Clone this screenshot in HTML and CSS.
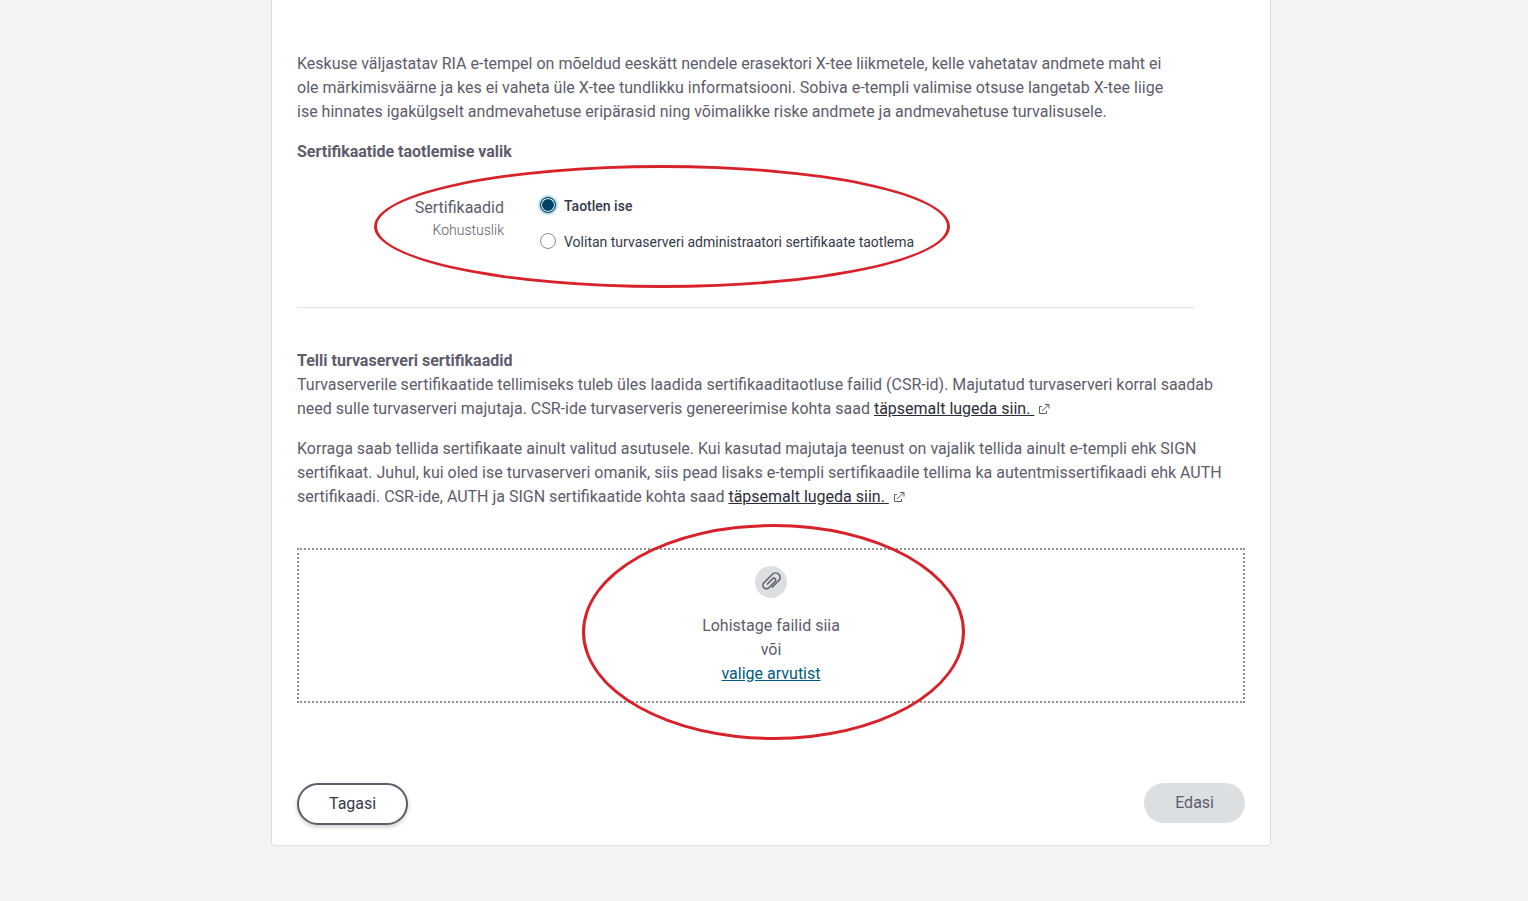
FILE: index.html
```html
<!DOCTYPE html>
<html lang="et">
  <head>
    <meta charset="UTF-8" />
    <meta name="viewport" content="width=device-width, initial-scale=1" />
    <title>Sertifikaatide taotlemine</title>
    <link rel="stylesheet" href="styles.css">
  </head>
  <body>
    <main class="card">
      <p class="intro">
        Keskuse väljastatav RIA e-tempel on mõeldud eeskätt nendele erasektori
        X-tee liikmetele, kelle vahetatav andmete maht ei ole märkimisväärne ja
        kes ei vaheta üle X-tee tundlikku informatsiooni. Sobiva e-templi
        valimise otsuse langetab X-tee liige ise hinnates igakülgselt
        andmevahetuse eripärasid ning võimalikke riske andmete ja andmevahetuse
        turvalisusele.
      </p>

      <h2>Sertifikaatide taotlemise valik</h2>
      <div class="choice" role="radiogroup" aria-labelledby="certLabel">
        <div class="choice-label">
          <span id="certLabel">Sertifikaadid</span>
          <small>Kohustuslik</small>
        </div>
        <div class="options">
          <label for="self">
            <input type="radio" id="self" name="cert" checked />
            <span>Taotlen ise</span>
          </label>
          <label for="admin">
            <input type="radio" id="admin" name="cert" />
            <span>Volitan turvaserveri administraatori sertifikaate taotlema</span>
          </label>
        </div>
        <div class="mark mark-choice"></div>
      </div>

      <hr />

      <h2>Telli turvaserveri sertifikaadid</h2>
      <p>
        Turvaserverile sertifikaatide tellimiseks tuleb üles laadida
        sertifikaaditaotluse failid (CSR-id). Majutatud turvaserveri korral
        saadab need sulle turvaserveri majutaja. CSR-ide turvaserveris
        genereerimise kohta saad
        <a class="external" href="#">täpsemalt lugeda siin.&nbsp;</a>
        <svg class="external-icon" viewBox="0 0 12 12" aria-hidden="true">
          <path d="M4 3.5H1.5V10.5H8.5V8M4 8L11 1.5M7 1.5H11V5.5" />
        </svg>
      </p>
      <p>
        Korraga saab tellida sertifikaate ainult valitud asutusele. Kui kasutad
        majutaja teenust on vajalik tellida ainult e-templi ehk SIGN
        sertifikaat. Juhul, kui oled ise turvaserveri omanik, siis pead lisaks
        e-templi sertifikaadile tellima ka autentmissertifikaadi ehk AUTH
        sertifikaadi. CSR-ide, AUTH ja SIGN sertifikaatide kohta saad
        <a class="external" href="#">täpsemalt lugeda siin.&nbsp;</a>
        <svg class="external-icon" viewBox="0 0 12 12" aria-hidden="true">
          <path d="M4 3.5H1.5V10.5H8.5V8M4 8L11 1.5M7 1.5H11V5.5" />
        </svg>
      </p>

      <div class="dropzone">
        <div class="clip">
          <svg viewBox="0 0 32 32" aria-hidden="true">
            <path transform="rotate(45 16 16)" d="M20.5 19V9.5A4.5 4.5 0 0 0 11.5 9.5V21.5A3.5 3.5 0 0 0 18.5 21.5V12.5A1.8 1.8 0 0 0 14.9 12.5V20" />
          </svg>
        </div>
        <span>Lohistage failid siia</span>
        <span>või</span>
        <a href="#">valige arvutist</a>
        <div class="mark mark-drop"></div>
      </div>

      <div class="actions">
        <button type="button" class="back">Tagasi</button>
        <button type="button" class="next" disabled>Edasi</button>
      </div>
    </main>
  </body>
</html>
```
FILE: styles.css
```css
* {
  box-sizing: border-box;
}
body {
  margin: 0;
  padding: 0 0 0 14px;
  background: #f3f3f3;
  color: #5e5c6b;
  font: 16px/24px Roboto, sans-serif;
}
.card {
  max-width: 1000px;
  margin: 0 auto 54px;
  padding: 52px 25px 20px;
  background: #fff;
  border: 1px solid #dcdfe2;
  border-top: 0;
  border-radius: 0 0 4px 4px;
}
p {
  margin: 0 0 16px;
}
.intro {
  max-width: 880px;
}
h2 {
  margin: 0;
  font-size: 16px;
  line-height: 24px;
  font-weight: 700;
}
.choice {
  position: relative;
  display: flex;
  gap: 36px;
  padding-top: 32px;
}
.choice-label {
  display: flex;
  flex-direction: column;
  width: 207px;
  text-align: right;
}
.choice-label small {
  font-size: 14px;
  line-height: 20px;
  font-weight: 300;
}
.options {
  display: flex;
  flex-direction: column;
  gap: 16px;
  color: #34394c;
  font-size: 14px;
  line-height: 20px;
}
.options label {
  display: flex;
  gap: 8px;
}
.options input {
  appearance: none;
  width: 16px;
  height: 16px;
  margin: 1px 0 0;
  border: 1px solid #8c8f99;
  border-radius: 50%;
}
.options input:checked {
  border-color: #004465;
  background: #004465;
  box-shadow: inset 0 0 0 1px #fff, 0 0 0 2px #b8dcea;
}
.options input:checked + span {
  font-weight: 500;
}
hr {
  max-width: 898px;
  margin: 55px 0 41px;
  border: 0;
  border-top: 1px solid #dfe1e4;
}
a {
  color: #005b7f;
}
.external {
  color: #2b2c38;
}
.external-icon {
  width: 12px;
  height: 12px;
  vertical-align: -1px;
  fill: none;
  stroke: #5e5c6b;
}
.dropzone {
  position: relative;
  display: flex;
  flex-direction: column;
  align-items: center;
  margin-top: 39px;
  padding: 16px 16px 15px;
  border: 2px dotted #8f9097;
}
.clip {
  width: 32px;
  height: 32px;
  margin-bottom: 16px;
  border-radius: 50%;
  background: #dbdfe2;
}
.clip svg {
  display: block;
  fill: none;
  stroke: #5e5c6b;
  stroke-width: 1.5;
  stroke-linecap: round;
}
.actions {
  display: flex;
  justify-content: space-between;
  align-items: flex-start;
  margin-top: 80px;
}
button {
  height: 40px;
  padding: 0 31px;
  border: 0;
  border-radius: 21px;
  font: inherit;
}
.back {
  height: 42px;
  padding: 0 30px;
  border: 2px solid #5e5c6b;
  background: #fff;
  color: #34394c;
  box-shadow: 0 2px 4px rgba(0, 0, 0, 0.2);
}
.next {
  background: #dbdfe2;
  color: #5e5c6b;
}
/* red ellipses drawn over the form */
.mark {
  position: absolute;
  border: 3px solid #d8222a;
  border-radius: 50%;
  pointer-events: none;
}
.mark-choice {
  top: 1px;
  left: 77px;
  width: 576px;
  height: 123px;
}
.mark-drop {
  top: -26px;
  left: 50%;
  width: 383px;
  height: 216px;
  margin-left: -189px;
}
```
